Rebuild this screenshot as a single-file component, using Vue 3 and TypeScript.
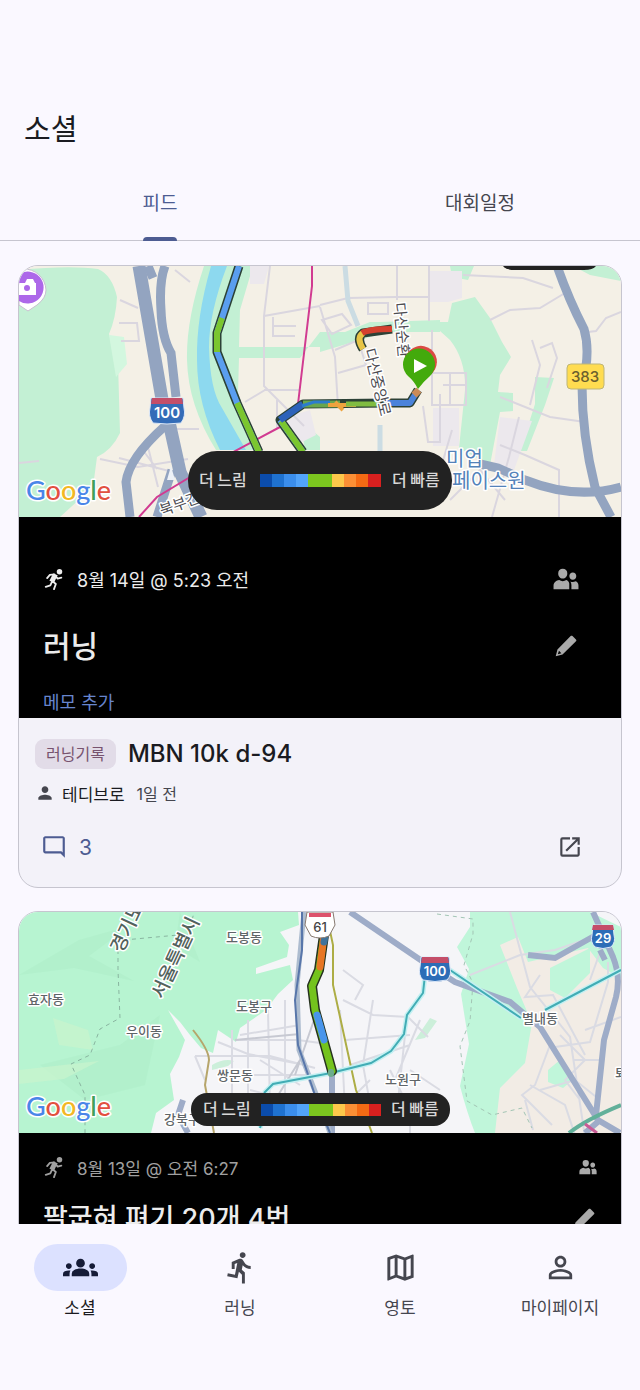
<script setup lang="ts">
import { ref } from 'vue'

interface NavItem {
  label: string
  icon: string
}

const icons = {
  groups:
    'M4 13c1.1 0 2-.9 2-2s-.9-2-2-2-2 .9-2 2 .9 2 2 2zm1.13 1.1c-.37-.06-.74-.1-1.13-.1-.99 0-1.93.21-2.78.58A2.01 2.01 0 0 0 0 16.43V18h4.5v-1.61c0-.83.23-1.61.63-2.29zM20 13c1.1 0 2-.9 2-2s-.9-2-2-2-2 .9-2 2 .9 2 2 2zm4 3.43c0-.81-.48-1.53-1.22-1.85a6.95 6.95 0 0 0-2.78-.58c-.39 0-.76.04-1.13.1.4.68.63 1.46.63 2.29V18H24v-1.57zM16.24 13.65c-1.17-.52-2.61-.9-4.24-.9-1.63 0-3.07.39-4.24.9A2.99 2.99 0 0 0 6 16.39V18h12v-1.61c0-1.18-.68-2.26-1.76-2.74zM12 6c1.66 0 3 1.34 3 3s-1.34 3-3 3-3-1.34-3-3 1.34-3 3-3z',
  run: 'M13.49 5.48c1.1 0 2-.9 2-2s-.9-2-2-2-2 .9-2 2 .9 2 2 2zm-3.6 13.9l1-4.4 2.1 2v6h2v-7.5l-2.1-2 .6-3c1.3 1.5 3.3 2.5 5.5 2.5v-2c-1.9 0-3.5-1-4.3-2.4l-1-1.6c-.4-.6-1-1-1.7-1-.3 0-.5.1-.8.1l-5.2 2.2v4.7h2v-3.4l1.8-.7-1.6 8.1-4.9-1-.4 2 7 1.4z',
  map: 'M20.5 3l-.16.03L15 5.1 9 3 3.36 4.9c-.21.07-.36.25-.36.48V20.5c0 .28.22.5.5.5l.16-.03L9 18.9l6 2.1 5.64-1.9c.21-.07.36-.25.36-.48V3.5c0-.28-.22-.5-.5-.5zM10 5.47l4 1.4v11.66l-4-1.4V5.47zm-5 .99l3-1.01v11.7l-3 1.16V6.46zm14 11.08l-3 1.01V6.86l3-1.16v11.84z',
  personOutline:
    'M12 5.9c1.16 0 2.1.94 2.1 2.1s-.94 2.1-2.1 2.1S9.9 9.16 9.9 8s.94-2.1 2.1-2.1m0 9c2.97 0 6.1 1.46 6.1 2.1v1.1H5.9V17c0-.64 3.13-2.1 6.1-2.1M12 4C9.79 4 8 5.79 8 8s1.79 4 4 4 4-1.79 4-4-1.79-4-4-4zm0 9c-2.67 0-8 1.34-8 4v3h16v-3c0-2.66-5.33-4-8-4z',
  person:
    'M12 12c2.21 0 4-1.79 4-4s-1.79-4-4-4-4 1.79-4 4 1.79 4 4 4zm0 2c-2.67 0-8 1.34-8 4v2h16v-2c0-2.66-5.33-4-8-4z',
  comment:
    'M20 17.17L18.83 16H4V4h16v13.17zM20 2H4c-1.1 0-2 .9-2 2v12c0 1.1.9 2 2 2h14l4 4V4c0-1.1-.9-2-2-2z',
  open: 'M19 19H5V5h7V3H5a2 2 0 0 0-2 2v14a2 2 0 0 0 2 2h14c1.1 0 2-.9 2-2v-7h-2v7zM14 3v2h3.59l-9.83 9.83 1.41 1.41L19 6.41V10h2V3h-7z',
  people:
    'M9 2.5a4.2 4.2 0 0 1 4.2 4.4c0 2.4-1.7 4.7-4.2 4.7S4.8 9.3 4.8 6.9A4.2 4.2 0 0 1 9 2.5zM.5 21.5v-3.2c0-3.2 2.8-5 5.2-5.3 2 1.3 4.6 1.3 6.6 0 1.4.4 2.4 1.7 2.7 3.2v5.3zM18.3 6c1.9 0 3.2 1.5 3.2 3.3s-1.3 3.5-3.2 3.5-3.2-1.7-3.2-3.5S16.4 6 18.3 6zM17 21.5v-4c0-1.2-.4-2.3-1-3.2 1.6.7 3.4.6 4.8-.2 1.6.5 2.7 2 2.7 3.9v3.5z',
  pencil:
    'M2.5 21.500l1.600-6.300L16.300 2.800c.5-.5 1.200-.5 1.700 0l3.200 3.200c.5.500.5 1.200 0 1.700L8.800 19.900zm3-5.200l-1 3.200 3.200-.9z',
}

const runnerLimbs = 'M3 20.500l5-1.500 2-4.500M10 14l4 3.500-2 5.500M4.500 11l3-3.500 5-.5M13 8l3 3.500 4-1'

const tabs = ['피드', '대회일정']
const activeTab = ref(0)
const activeNav = ref(0)

const navItems: NavItem[] = [
  { label: '소셜', icon: icons.groups },
  { label: '러닝', icon: icons.run },
  { label: '영토', icon: icons.map },
  { label: '마이페이지', icon: icons.personOutline },
]

const paceColors = [
  '#0b4cab', '#1f72d0', '#3b8eec', '#52a4fa', '#7cc61f',
  '#7cc61f', '#fdc84b', '#fb8f35', '#f46a14', '#d8201f',
]

const google = [
  ['G', '#4a86e8'], ['o', '#e2503f'], ['o', '#f2b824'],
  ['g', '#4a86e8'], ['l', '#41a05a'], ['e', '#e2503f'],
]
</script>

<template>
  <div class="app">
    <header class="top">
      <h1>소셜</h1>
      <div class="tabs" role="tablist">
        <button
          v-for="(tab, i) in tabs"
          :key="tab"
          role="tab"
          type="button"
          class="tab"
          :class="{ active: activeTab === i }"
          :aria-selected="activeTab === i"
          @click="activeTab = i"
        >
          <span>{{ tab }}</span>
        </button>
      </div>
    </header>

    <main class="feed">
      <article class="card">
        <svg class="mapview" viewBox="19 266 602 251" role="img" aria-label="러닝 경로 지도">
          <rect x="19" y="266" width="602" height="251" fill="#f4f0e6" />
          <g fill="#c3f0d4">
            <path d="M19 270Q70 265 98 269Q112 275 117 297Q116 318 109 334L118 362L120 433Q112 450 97 457L93 487L60 517H19z" />
            <path d="M204 266H253L240 310L239 347H320L380 322L440 320V332H320L300 358H239L238 393L257 450H216Q188 405 187 360Q186 320 204 266z" />
            <path d="M320 342L370 322H448L452 303L475 297L490 318L502 342L511 357L500 375L498 392L513 393V411L500 412L490 465L459 448L465 390Q466 360 450 340L440 331H390L320 352z" />
            <path d="M450 266H474L468 280L452 277zM573 266H621V281L590 275zM300 420L320 437V450H305zM535 377L554 378L545 405L527 451H520L535 404z" />
          </g>
          <path d="M109 335l15 2 3 27-11 13z" fill="#d3f7df" />
          <path d="M211 266H227Q209 313 209 347Q210 390 222 408L246 450H220Q197 405 197 360Q196 318 211 266z" fill="#8dd9ef" />
          <g fill="#ece8ed">
            <path d="M250 266h19l-5 18h-14zM429 271h33v27l-14 4h-19zM433 408h26v38h-26zM284 418l26-8 6 25-16 8zM500 417l32 4-18 49-20-5z" />
          </g>
          <g fill="none" stroke="#dad6df" stroke-width="2">
            <path d="M270 266l-6 50v70l40 40M264 316l56-10M245 402l20-12M273 317v19h22M273 326h23M264 390h36M277 400v28M320 305l28-7 47-1h35M397 266v34M429 266v55M320 307l15 50 3 50M322 320l20-6 9 11-19 9zM335 350l23-10 8 25-28 8M368 303h20v11h-20z" />
            <path d="M432 330v75h34v-32h-33M450 372v33M443 385h22M423 406l5 36h12v-48M463 275l60 3 30 10M490 320l20-10 30-2 25-15M621 312l-15 6-10 13-8 1M500 397l50 20 35 5M519 417l-10 40-17 60M500 445l25 10 34 15v47M532 340l8 25-10 40M540 348l12-5 5 15-10 30M452 430l-10 34M450 500l30-30 25 30" />
            <path d="M19 463l20-2M120 300l18 8M119 323h18l2 18h-18M119 458l50 13M142 449l15 20M100 459l38 8 50-8M175 270l15 12M177 429h22M148 447l10 40" />
          </g>
          <path d="M345 266l3 35 10 25M380 425v30" fill="none" stroke="#cbdce3" stroke-width="5" />
          <g fill="none" stroke="#93a4c0" stroke-width="9">
            <path d="M165 266Q159 282 161 310Q162 338 171 353L176 397M148 266l5 12M165 426Q129 458 126 482L130 517M172 470L157 517" />
            <path d="M557 266Q569 300 584 329Q591 353 582 385Q582 435 595 487L611 517M480 464L498 468L525 480Q575 500 621 487" />
          </g>
          <path d="M139 266L163 405M169 422L180 472L201 517" fill="none" stroke="#93a4c0" stroke-width="13" />
          <path d="M171 466l4 14h-8z" fill="#edf1f7" />
          <path d="M312 266v20L298 404M280 427L220 459L157 497L139 517" fill="none" stroke="#d13b91" stroke-width="2" />
          <g fill="none" stroke-linejoin="round">
            <path class="edge" d="M239 266L217 333V352L237 403L259 452M303 452L280 420L303 404L387 403L410 403L418 390M363 349Q356 338 363 333L392 329" />
            <path d="M239 266L217 333V352L237 403L259 452M303 452L280 420" stroke="#5a9eef" stroke-width="6" />
            <path d="M222 318L217 333V352M237 403L259 452M303 452L281 421" stroke="#7bc62f" stroke-width="6" />
            <path d="M280 420L303 404" stroke="#2d62ba" stroke-width="7" />
            <path d="M303 404H340" stroke="#69a64e" stroke-width="7" />
            <path d="M302 406l12-4h16" stroke="#2c7ccd" stroke-width="3" />
            <path d="M328 405h28M335 402l8 8" stroke="#eea33e" stroke-width="4" />
            <path d="M346 404h32" stroke="#80bc42" stroke-width="5" />
            <path d="M387 403H410L418 390" stroke="#4b83db" stroke-width="6" />
            <path d="M414 395l5-5" stroke="#cb8b58" stroke-width="7" />
            <path d="M363 349Q356 338 363 333" stroke="#e8c546" stroke-width="6" />
            <path d="M362 333Q369 329 392 329" stroke="#d4402e" stroke-width="6" />
          </g>
          <g class="road">
            <text transform="translate(394 303) rotate(85)">다산순환</text>
            <text transform="translate(364 350) rotate(76)">다산중앙로</text>
            <text transform="translate(162 516) rotate(-20)">북부간</text>
          </g>
          <path d="M19 269h4a22 22 0 0 1 23 21q0 8-9 15l-9 6-9-6z" fill="#fff" stroke="#c8bfd0" />
          <path d="M19 274a16 16 0 1 1 0 27z" fill="#ad68e9" />
          <path d="M19 283h6l2-4h6l2 4h1v12H19z" fill="#fff" />
          <circle cx="27" cy="288" r="3" fill="#ad68e9" />
          <g transform="translate(167 411)">
            <path d="M-16 -13h32l1 10q2 8-3 15-14 2-28 0-5-7-3-15z" fill="#346cb8" stroke="#dce8f8" />
            <path d="M-15 -13h30l1 6h-32z" fill="#c44e69" />
            <text class="shield" y="7">100</text>
          </g>
          <path d="M430 375a16 16 0 1 0-24-19z" fill="#dc4a43" />
          <path d="M418 389q-4-8-10-13a16 16 0 1 1 22 0q-7 6-12 13z" fill="#43aa0c" />
          <path d="M414 359v14l13-7z" fill="#fff" />
          <rect x="567" y="364" width="37" height="25" rx="4" fill="#ffdc50" stroke="#bdb578" />
          <text class="route-number" x="585" y="382">383</text>
          <text class="place" x="446" y="466">미업</text>
          <text class="place" x="452" y="488">페이스원</text>
          <path d="M503 266h93q-3 4-12 4h-69q-9 0-12-4z" fill="#222" />
          <rect x="188" y="451" width="264" height="59" rx="29" fill="#222" />
          <text class="legend" x="199" y="486">더 느림</text>
          <rect v-for="(c, i) in paceColors" :key="i" :x="260 + i * 12" y="474" width="13" height="13" :fill="c" />
          <text class="legend" x="392" y="486">더 빠름</text>
          <text class="google" x="26" y="500"><tspan v-for="(g, i) in google" :key="i" :fill="g[1]">{{ g[0] }}</tspan></text>
        </svg>

        <div class="record">
          <div class="record-row">
            <svg class="i22" viewBox="0 0 24 24">
              <circle cx="18" cy="4" r="3" />
              <path d="M11 6l5 2-4 8-5-2z" />
              <path class="limbs" :d="runnerLimbs" />
            </svg>
            <span class="when">8월 14일 @ 5:23 오전</span>
            <svg class="i26 muted" viewBox="0 0 24 24"><path :d="icons.people" /></svg>
          </div>
          <div class="record-row title-row">
            <strong>러닝</strong>
            <svg class="i26 muted" viewBox="0 0 24 24"><path :d="icons.pencil" /></svg>
          </div>
          <div class="memo">메모 추가</div>
        </div>

        <div class="body">
          <div class="headline">
            <span class="chip">러닝기록</span>
            <h2>MBN 10k d-94</h2>
          </div>
          <div class="author">
            <svg class="i20" viewBox="0 0 24 24"><path :d="icons.person" /></svg>
            <span class="name">테디브로</span>
            <time>1일 전</time>
          </div>
          <div class="actions">
            <button type="button" class="comments" aria-label="댓글 3개">
              <svg class="i26" viewBox="0 0 24 24"><path :d="icons.comment" /></svg>
              <span>3</span>
            </button>
            <button type="button" class="open" aria-label="열기">
              <svg class="i26" viewBox="0 0 24 24"><path :d="icons.open" /></svg>
            </button>
          </div>
        </div>
      </article>

      <article class="card">
        <svg class="mapview" viewBox="19 912 602 221" role="img" aria-label="러닝 경로 지도">
          <rect x="19" y="912" width="602" height="221" fill="#f5f5f8" />
          <path d="M19 912H298L299 925L280 932L289 945L287 957L256 968V974L290 965L293 980L278 994L266 1010L240 1028L236 1042L218 1030L213 1053L201 1048L190 1035L180 1022L168 1010L185 1040L179 1057L170 1074L174 1100L156 1113L151 1133H19z" fill="#b7f4d1" />
          <g fill="#a9eac6">
            <path d="M19 975l60-35 50-14-40 30 45 25-60-13zM40 1065l80-20 40-30-15 70-60 15zM180 912l20 50-25-15z" opacity=".4" />
          </g>
          <path d="M53 1018l35 12 5 20-34-5zM19 1070l80-9-35 18-45 5z" fill="#c9f4cd" opacity=".7" />
          <path d="M470 912h120l31 15v206H475q-8-20-15-47l9-42-8-50 8-25-12-22 13-20z" fill="#c0f6da" />
          <path d="M500 945l18-8 10 25 60-14 15 20 18 10v155H495l5-45 25-25 7-40-15-35z" fill="#f2ece5" />
          <path d="M550 968l40-20v25l-25 25-15-8zM548 1070l12-10 15 18-12 10-15-6z" fill="#c0f6da" />
          <path d="M415 1040l15-22 7 3-12 17zM212 1065q12-7 22-4l-6 5-16 4z" fill="#ccefda" />
          <g fill="none" stroke="#dadbe3" stroke-width="2">
            <path d="M195 1056h75l45 12M205 1080l-10-24M236 1040h62l22 3M218 1042l30 12 52 10M232 1030v80M248 1020v90M268 1010l2 100M285 1000v110M300 1025l-60 10M240 1075h70M260 1060l40 25M250 1090l60 15" />
            <path d="M343 1000l30 15 35 2 20 20M345 1040l65-5M350 1065l60-20M373 1000l-10 65 10 55M405 1035l-8 75M420 1020l-25 60 10 20M390 1070l20 40M340 1010l5 100M370 1080l-20 20M440 1090l-30-20M343 970l20 15-8 15M410 1110v23" />
            <path d="M470 975l50-20 35-5 35-12M510 912l20 75 40 50 15 100M540 975l-15 22 28-2 32 60M590 980l18-50M608 962v20l-18 60-35 5M550 1045l-15 40-13 10 30 30M525 1100l8 30M530 1085l35 20 10 30M560 1035l25 25-20 20 15 20M585 1030l36-13M573 1060h30M540 1090l35-10 25 20" />
          </g>
          <path d="M314 1020L295 1075M300 1034l-65 6M300 1060l-28 45" fill="none" stroke="#c7c9d2" stroke-width="2" />
          <path d="M118 950V970L120 1018L100 1029L90 1055L71 1064L85 1095V1133M124 940l65-6 5-22" fill="none" stroke="#89b5a0" stroke-dasharray="4 4" />
          <path d="M437 914l36 5v15l-9 31 9 18-3 38-10 25 7 55 25 14 30-7 10 20" fill="none" stroke="#a2c5b4" stroke-dasharray="4 4" />
          <g fill="none" stroke="#9eacc8" stroke-width="6">
            <path d="M350 912L422 961L455 982L510 1002L540 1027L598 1120L620 1133M528 955L555 958L596 935M593 912l20 45q8 20 3 40L604 1040L596 1115M600 950l5 10M600 1120l-15 13M332 1070v63M183 1100l-5 15 10 18" />
          </g>
          <path d="M193 1030Q209 1050 209 1060L205 1085L214 1133" class="line" stroke="#b6a56b" />
          <path d="M326 912L333 945V985L356 1090L372 1133" class="line" stroke="#adad45" />
          <path d="M304 912L297 985L299 1050L320 1104L330 1133" fill="none" stroke="#adbccf" stroke-width="5" />
          <path d="M302 912V950L295 1000L298 1045L318 1104L330 1133" class="line" stroke="#5876aa" />
          <path d="M264 1093L273 1084L331 1073L371 1063L391 1051L404 1034L407 1015L423 993L425 975M450 970L521 1018M545 1010L621 970M260 1128l6-20" fill="none" stroke="#c4f0f2" stroke-width="5" />
          <path d="M264 1093L273 1084L331 1073L371 1063L391 1051L404 1034L407 1015L423 993L425 975M450 970L521 1018M545 1010L621 970M260 1128l6-20" class="line" stroke="#42adb5" />
          <path d="M569 1133Q585 1120 621 1105" fill="none" stroke="#62b09a" stroke-width="4" />
          <path d="M585 1124l12 9" stroke="#c95c96" stroke-width="3" />
          <g fill="none" stroke-linejoin="round" stroke-linecap="round">
            <path d="M324 935L319 970L312 986L315 1010L322 1035L332 1071" stroke="#26321f" stroke-width="10" />
            <path d="M324 935L319 970L312 986L315 1010L322 1035L332 1071" stroke="#74c31d" stroke-width="7" />
            <path d="M324 935L320 967" stroke="#e77624" stroke-width="7" />
            <path d="M317 1015L324 1040" stroke="#4995eb" stroke-width="7" />
            <path d="M331 1072v2" stroke="#6bad8d" stroke-width="6" />
            <path d="M324 942l1-6" stroke="#40739b" stroke-width="7" />
          </g>
          <g class="town">
            <text x="28" y="1004">효자동</text>
            <text x="126" y="1036">우이동</text>
            <text x="226" y="942">도봉동</text>
            <text x="236" y="1011">도봉구</text>
            <text x="217" y="1080">쌍문동</text>
            <text x="385" y="1084">노원구</text>
            <text x="522" y="1023">별내동</text>
            <text x="164" y="1124">강북구</text>
            <text x="615" y="1078">퇴</text>
          </g>
          <g class="city">
            <text transform="translate(122 954) rotate(-65)">경기도</text>
            <text transform="translate(163 1000) rotate(-65)">서울특별시</text>
          </g>
          <g transform="translate(435 970)">
            <path d="M-14 -13h28l1 10q2 8-3 13-12 3-24 0-5-5-3-13z" fill="#2c6db7" stroke="#dce8f8" />
            <path d="M-13 -13h26l1 6h-28z" fill="#c44e69" />
            <text class="shield small" y="6">100</text>
          </g>
          <g transform="translate(603 937)">
            <path d="M-10 -12h20l1 10q2 7-3 12-8 3-16 0-5-5-3-12z" fill="#2c6db7" stroke="#dce8f8" />
            <path d="M-10 -12h20l1 5h-22z" fill="#c44e69" />
            <text class="shield small" y="6">29</text>
          </g>
          <path d="M307 912h26l2 13-6 11q-9 4-18 0l-6-11z" fill="#fff" stroke="#867970" />
          <path d="M309 913h22v4h-22z" fill="#dd526c" />
          <text class="hex" x="320" y="932">61</text>
          <rect x="191" y="1093" width="259" height="33" rx="16" fill="#222" />
          <text class="legend" x="203" y="1115">더 느림</text>
          <rect v-for="(c, i) in paceColors" :key="i" :x="261 + i * 12" y="1104" width="12" height="12" :fill="c" />
          <text class="legend" x="391" y="1115">더 빠름</text>
          <text class="google" x="26" y="1116"><tspan v-for="(g, i) in google" :key="i" :fill="g[1]">{{ g[0] }}</tspan></text>
        </svg>

        <div class="record second">
          <div class="record-row">
            <svg class="i22" viewBox="0 0 24 24">
              <circle cx="18" cy="4" r="3" />
              <path d="M11 6l5 2-4 8-5-2z" />
              <path class="limbs" :d="runnerLimbs" />
            </svg>
            <span class="when">8월 13일 @ 오전 6:27</span>
            <svg class="i18 muted" viewBox="0 0 24 24"><path :d="icons.people" /></svg>
          </div>
          <div class="record-row title-row">
            <strong>팔굽혀 펴기 20개 4번</strong>
            <svg class="i26 muted" viewBox="0 0 24 24"><path :d="icons.pencil" /></svg>
          </div>
        </div>
      </article>
    </main>

    <nav class="bottom">
      <button
        v-for="(item, i) in navItems"
        :key="item.label"
        type="button"
        class="nav-item"
        :class="{ active: activeNav === i }"
        :aria-current="activeNav === i ? 'page' : undefined"
        @click="activeNav = i"
      >
        <span class="nav-pill">
          <svg class="i35" viewBox="0 0 24 24"><path :d="item.icon" fill-rule="evenodd" /></svg>
        </span>
        <span>{{ item.label }}</span>
      </button>
    </nav>
  </div>
</template>

<style>
body {
  margin: 0;
  background: #faf8ff;
}
</style>

<style scoped>
.app {
  display: flex;
  flex-direction: column;
  height: 100vh;
  background: #faf8ff;
  color: #1a1b21;
  font-family: Inter, "Noto Sans CJK KR", sans-serif;
}

button {
  border: 0;
  padding: 0;
  background: none;
  color: inherit;
  font: inherit;
  cursor: pointer;
}

svg {
  display: block;
  flex: none;
  fill: currentColor;
}

.i18 { width: 18px; height: 18px; }
.i20 { width: 20px; height: 20px; }
.i22 { width: 22px; height: 22px; }
.i26 { width: 26px; height: 26px; }
.i35 { width: 35px; height: 35px; }

.limbs {
  fill: none;
  stroke: currentColor;
  stroke-width: 2px;
  stroke-linecap: round;
  stroke-linejoin: round;
}

.top {
  flex: none;
  padding-top: 109px;
}

h1 {
  margin: 0 24px;
  font-size: 29px;
  line-height: 42px;
  font-weight: 400;
}

.tabs {
  display: flex;
  margin-top: 14px;
  border-bottom: 1px solid #c6c5cf;
}

.tab {
  display: flex;
  flex: 1;
  justify-content: center;
  height: 75px;
  font-size: 19px;
  line-height: 78px;
  color: #45464f;
}

.tab.active {
  color: #4d5c92;
}

.tab.active span {
  display: flex;
  flex-direction: column;
  height: 76px;
}

.tab.active span::after {
  content: "";
  flex: none;
  height: 4px;
  margin-top: -6px;
  border-radius: 4px 4px 0 0;
  background: #4d5c92;
}

.feed {
  display: flex;
  flex: 1;
  flex-direction: column;
  gap: 23px;
  min-height: 0;
  padding: 24px 18px 0;
  overflow-y: auto;
  scrollbar-width: none;
}

.card {
  flex: none;
  overflow: hidden;
  border: 1px solid #c6c5cf;
  border-radius: 20px;
  background: #f3f2f9;
}

.mapview {
  width: 100%;
  height: auto;
  font-family: "Noto Sans CJK KR", sans-serif;
}

.edge {
  stroke: #2c4136;
  stroke-width: 9px;
}

.line {
  fill: none;
  stroke-width: 2px;
}

.road text,
.town text,
.city text,
.place,
.google {
  paint-order: stroke;
  stroke: #fff;
  stroke-width: 3px;
  stroke-linejoin: round;
}

.road text {
  font-size: 15px;
  fill: #4d4c51;
}

.town text {
  font-size: 13px;
  font-weight: 500;
  fill: #5f6568;
}

.city text {
  font-size: 19px;
  font-weight: 500;
  fill: #53625c;
}

.place {
  font-size: 20px;
  fill: #5382b9;
}

.shield {
  font: 600 15px Inter, sans-serif;
  fill: #fff;
  text-anchor: middle;
}

.shield.small {
  font-size: 13px;
}

.route-number {
  font: 500 15px Inter, sans-serif;
  fill: #6b602e;
  text-anchor: middle;
}

.hex {
  font: 500 13px Inter, sans-serif;
  fill: #444;
  text-anchor: middle;
}

.legend {
  font-size: 16px;
  font-weight: 500;
  fill: #d8d8d8;
}

.google {
  font-family: Lato, sans-serif;
  font-size: 27px;
  font-weight: 500;
}

.record {
  display: flex;
  flex-direction: column;
  padding: 49px 42px 2px 24px;
  background: #000;
  color: #ececec;
}

.record-row {
  display: flex;
  align-items: center;
  height: 26px;
  gap: 12px;
}

.when {
  flex: 1;
  font-size: 18px;
}

.muted {
  color: #aaa;
}

.title-row {
  justify-content: space-between;
  height: 44px;
  margin-top: 32px;
}

.title-row strong {
  font-size: 30px;
  line-height: 44px;
  font-weight: 500;
}

.memo {
  margin-top: 22px;
  font-size: 18px;
  line-height: 26px;
  color: #6785cd;
}

.second {
  min-height: 201px;
  padding: 21px 24px 3px 24px;
}

.second .record-row:first-child {
  color: #a0a0a0;
}

.second .when {
  font-size: 17px;
}

.second .title-row {
  margin-top: 17px;
}

.second .title-row strong {
  font-size: 27px;
}

.body {
  padding: 20px 32px 17px 16px;
}

.headline {
  display: flex;
  align-items: center;
  gap: 12px;
}

.chip {
  padding: 0 11px;
  border-radius: 9px;
  background: #e2dce8;
  font-size: 16px;
  line-height: 30px;
  color: #78536f;
}

h2 {
  margin: 0;
  font-size: 24px;
  line-height: 32px;
  font-weight: 500;
}

.author {
  display: flex;
  align-items: center;
  height: 26px;
  margin-top: 10px;
  color: #45464f;
}

.name {
  margin: 0 12px 0 7px;
  font-size: 17px;
  color: #1a1b21;
}

time {
  font-size: 16px;
}

.actions {
  display: flex;
  align-items: center;
  justify-content: space-between;
  height: 46px;
  margin-top: 18px;
  padding: 0 6px;
}

.comments {
  display: flex;
  align-items: center;
  gap: 12px;
  font-size: 21px;
  color: #4d5c92;
}

.open {
  color: #45464f;
}

.bottom {
  display: flex;
  flex: none;
  padding: 20px 0 68px;
  background: #faf8ff;
}

.nav-item {
  display: flex;
  flex: 1;
  flex-direction: column;
  align-items: center;
  gap: 4px;
  font-size: 17px;
  line-height: 27px;
  color: #45464f;
}

.nav-item.active {
  color: #1a1b21;
}

.nav-pill {
  display: grid;
  place-items: center;
  width: 93px;
  height: 47px;
  border-radius: 24px;
}

.active .nav-pill {
  background: #dce1ff;
  color: #151b37;
}
</style>
